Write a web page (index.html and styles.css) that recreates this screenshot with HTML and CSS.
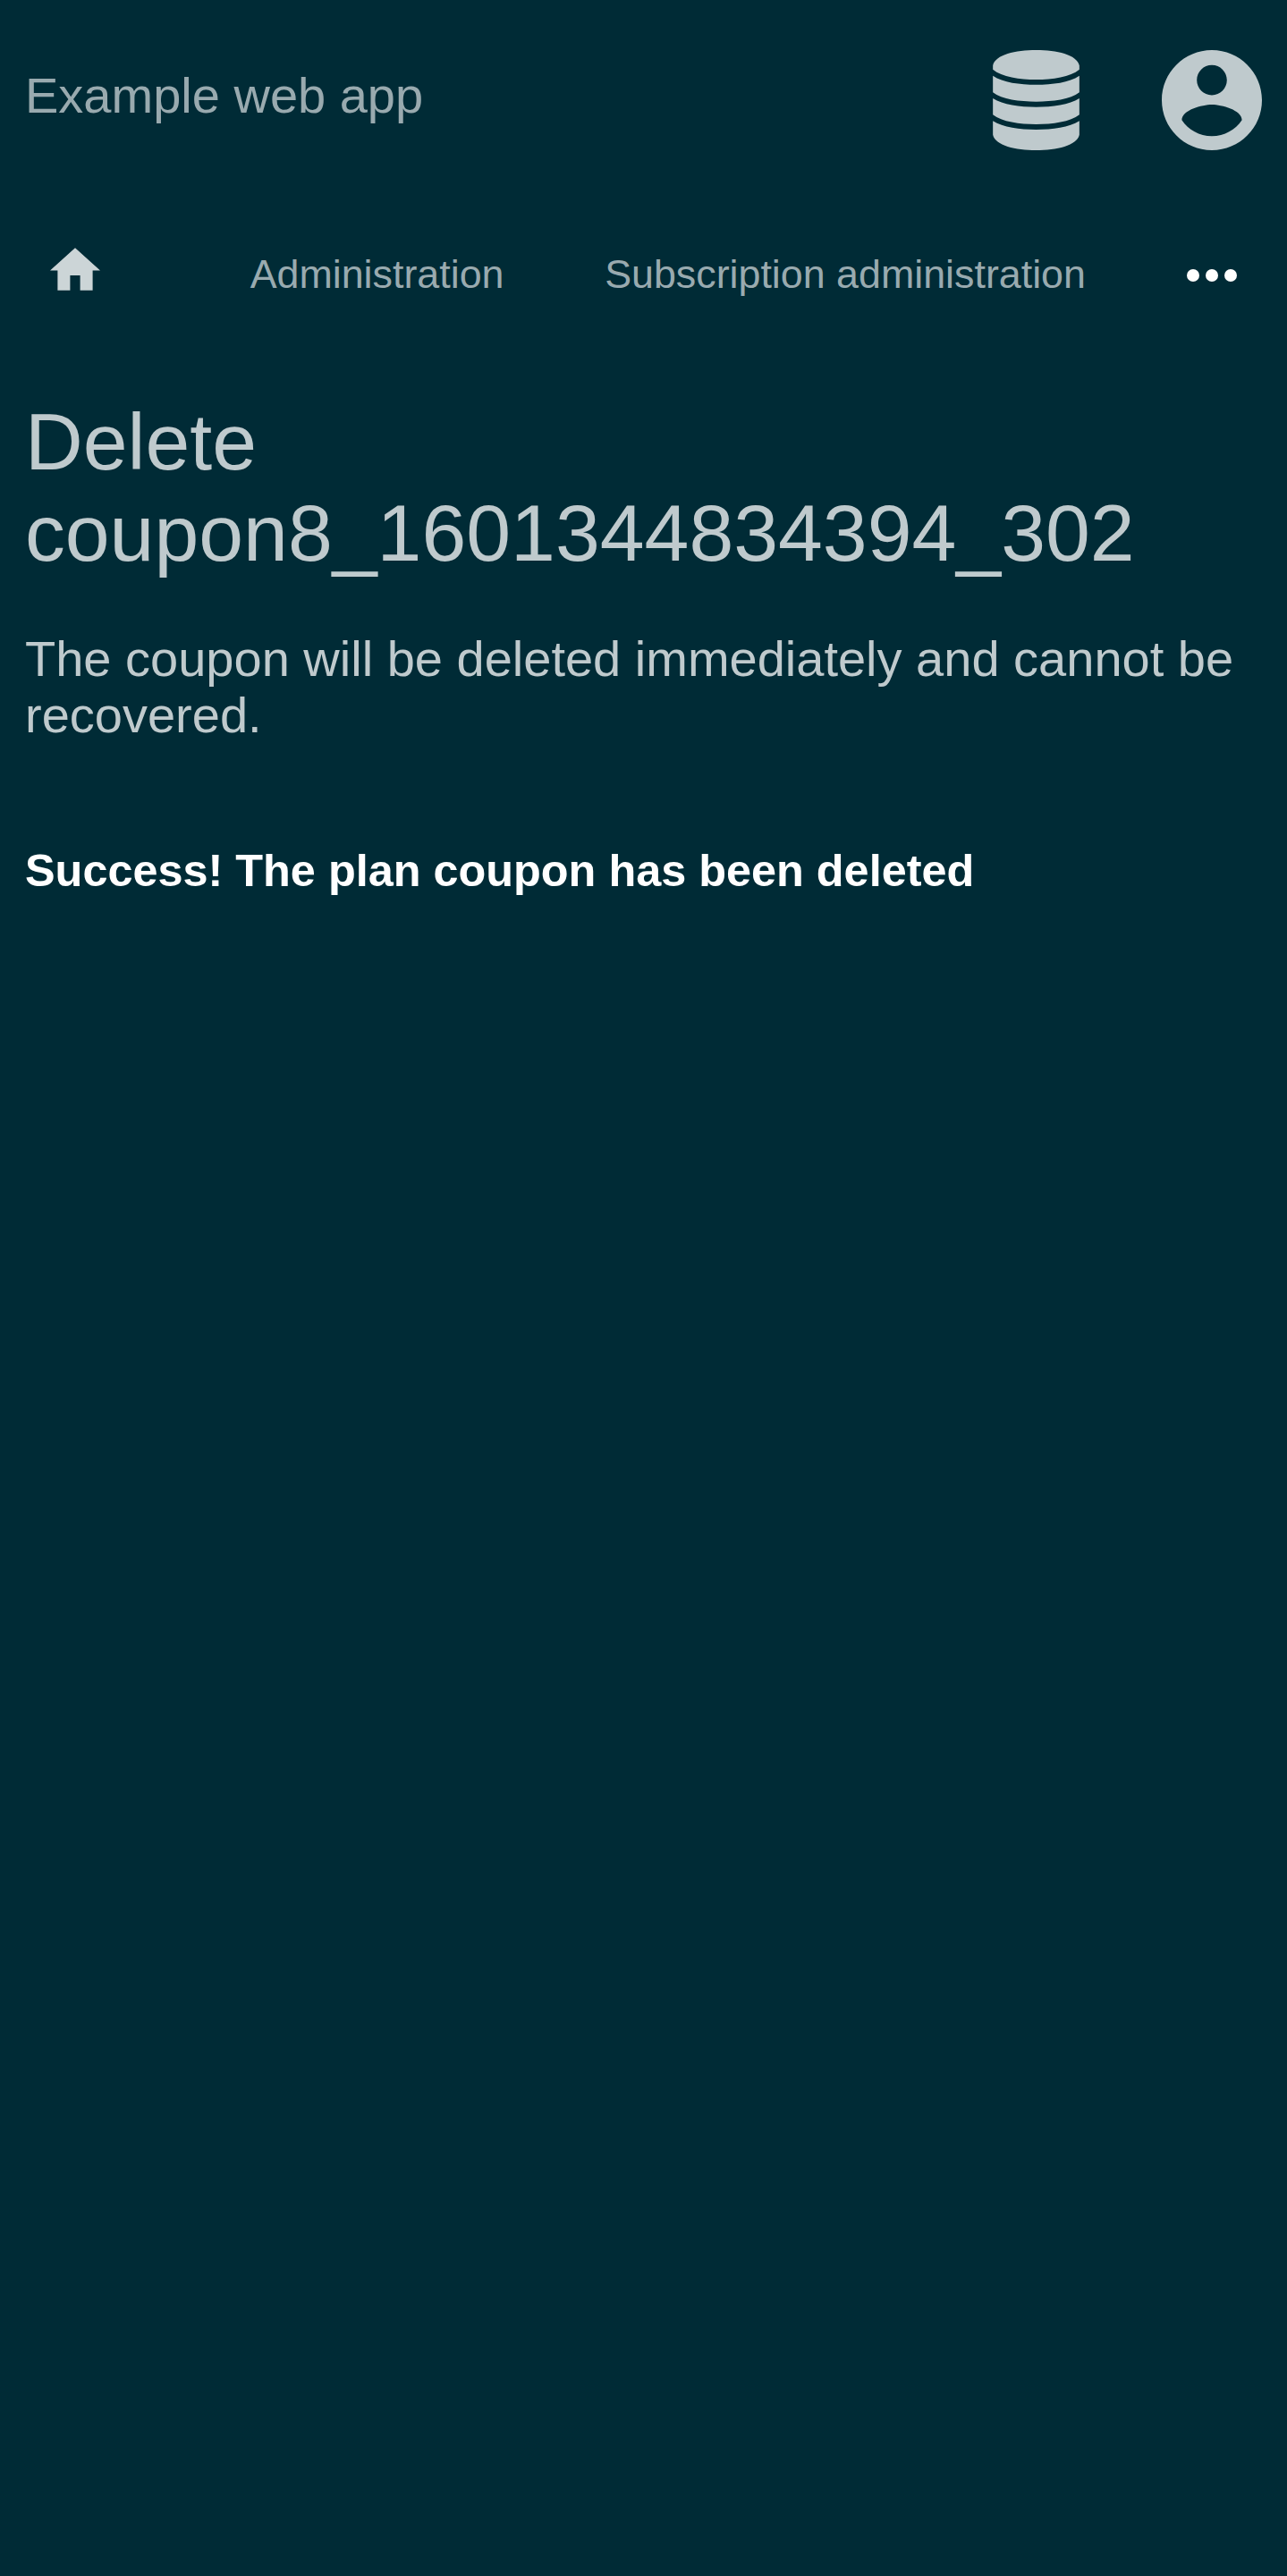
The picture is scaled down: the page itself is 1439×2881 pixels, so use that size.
FILE: index.html
```html
<!DOCTYPE html>
<html lang="en">
<head>
<meta charset="utf-8">
<title>Example web app</title>
<link rel="stylesheet" href="styles.css">
</head>
<body>
<header class="header">
  <a class="brand">Example web app</a>
  <div class="menus">
    <svg class="database" viewBox="0 0 290 336"><path d="M0 52C8 15 76 0 145 0S282 15 290 52V65C260 90 200 99 145 99S30 90 0 65ZM0 86C34 109 90 116 145 116S256 109 290 86V142C260 166 200 173 145 173S30 166 0 142ZM0 162C34 184 90 191 145 191S256 184 290 162V217C260 241 200 249 145 249S30 241 0 217ZM0 238C34 260 90 267 145 267S256 260 290 238V284C282 320 214 336 145 336S8 320 0 284Z"/></svg>
    <svg class="account" viewBox="2 2 20 20"><path d="M12 2C6.48 2 2 6.48 2 12s4.48 10 10 10 10-4.48 10-10S17.52 2 12 2zm0 3c1.66 0 3 1.34 3 3s-1.34 3-3 3-3-1.34-3-3 1.34-3 3-3zm0 14.2c-2.5 0-4.71-1.28-6-3.22.03-1.99 4-3.08 6-3.08 1.99 0 5.97 1.09 6 3.08-1.29 1.94-3.5 3.22-6 3.22z"/></svg>
  </div>
</header>
<nav class="nav">
  <a class="home"><svg viewBox="2 3 20 17"><path d="M10 20v-6h4v6h5v-8h3L12 3 2 12h3v8z"/></svg></a>
  <a>Administration</a>
  <a>Subscription administration</a>
  <span class="more"><svg viewBox="4 10 16 4"><circle cx="6" cy="12" r="2"/><circle cx="12" cy="12" r="2"/><circle cx="18" cy="12" r="2"/></svg></span>
</nav>
<main class="content">
  <h1>Delete coupon8_1601344834394_302</h1>
  <p>The coupon will be deleted immediately and cannot be recovered.</p>
  <div class="message">Success! The plan coupon has been deleted</div>
</main>
</body>
</html>
```
FILE: styles.css
```css
* { box-sizing: border-box; }
body { margin: 0; min-height: 100vh; background: #002b36; color: #bfcacd; font-family: "Liberation Sans", Arial, sans-serif; }
svg { display: block; }
.header { display: flex; justify-content: space-between; height: 224px; padding: 56px 28px 0; }
.brand { padding-top: 19px; font-size: 56px; line-height: 64px; color: #99aaaf; }
.menus { display: flex; gap: 92px; }
.menus svg { height: 112px; fill: #bfcacd; }
.database { width: 97px; }
.account { width: 112px; }
.nav { display: flex; justify-content: space-between; align-items: flex-start; height: 168px; padding: 53px 56.4px 0 56px; font-size: 44.8px; line-height: 51px; color: #99aaaf; }
.nav a { padding-top: 4px; }
.nav .home { padding: 0 55px 0 0; }
.home svg { width: 56px; height: 48px; fill: #ccd5d7; }
.more { padding-top: 24px; }
.more svg { width: 56px; height: 14px; fill: #fff; }
.content { padding: 51px 28px; }
h1 { margin: 0; font-size: 89.6px; font-weight: 400; line-height: 102px; }
p { margin: 58px 0 0; font-size: 56px; line-height: 63px; }
.message { margin-top: 114px; font-size: 50.4px; font-weight: 700; line-height: 57px; color: #fff; }
```
